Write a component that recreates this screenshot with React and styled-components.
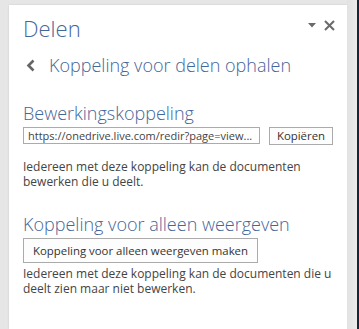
import React from 'react';
import styled, { createGlobalStyle } from 'styled-components';

const GlobalStyle = createGlobalStyle`
  html, body {
    margin: 0;
    padding: 0;
    background: #e6e6e6;
    font-family: "Open Sans", "Liberation Sans", sans-serif;
  }
`;

const Frame = styled.div`
  display: flex;
  width: 359px;
  height: 329px;
  overflow: hidden;
`;

const Pane = styled.div`
  margin: 5px 0 0 9px;
  width: 338px;
  background: #fff;
  box-shadow: 0 0 2px rgba(0, 0, 0, 0.12);
  padding: 8px 12px 0 14px;
  box-sizing: border-box;
`;

const Gutter = styled.div`
  flex: 1;
  background: linear-gradient(90deg, #e2e2e2, #ebebeb);
`;

const Edge = styled.div`
  width: 2px;
  background: #14263a;
`;

const Header = styled.div`
  display: flex;
  align-items: flex-start;
  justify-content: space-between;
`;

const Title = styled.h1`
  margin: 0;
  font-size: 22px;
  font-weight: 300;
  line-height: 30px;
  color: #44669a;
`;

const PaneTools = styled.div`
  display: flex;
  align-items: center;
  gap: 8px;
  padding-top: 7px;
  color: #6a6a6a;
`;

const BackRow = styled.div`
  display: flex;
  align-items: center;
  gap: 14px;
  margin-top: 10px;
  padding-left: 3px;
`;

const Heading = styled.h2`
  margin: 0;
  font-size: 18px;
  font-weight: 300;
  line-height: 24px;
  color: #44669a;
`;

const Section = styled.section`
  margin-top: ${(p) => p.$gap}px;
  display: flex;
  flex-direction: column;
  align-items: flex-start;
  gap: 2px;
`;

const LinkRow = styled.div`
  display: flex;
  align-items: flex-start;
  gap: 9px;
`;

const LinkField = styled.div`
  width: 237px;
  height: 17px;
  box-sizing: border-box;
  border: 1px solid #ababab;
  padding: 0 4px;
  font-size: 11px;
  line-height: 15px;
  color: #444;
  white-space: nowrap;
  overflow: hidden;
`;

const Button = styled.button`
  height: ${(p) => p.$h}px;
  ${(p) => p.$w && `width: ${p.$w}px;`}
  box-sizing: border-box;
  border: 1px solid #ababab;
  background: #fdfdfd;
  padding: 0 ${(p) => p.$px}px;
  font-family: inherit;
  font-size: 11.4px;
  color: #333;
  line-height: 1;
  white-space: nowrap;
`;

const Note = styled.p`
  margin: ${(p) => p.$top}px 0 0;
  font-size: 12px;
  line-height: 15px;
  color: #444;
`;

const Caret = () => (
  <svg width="8" height="5" viewBox="0 0 8 5">
    <path d="M0 0h8L4 4.5z" fill="currentColor" />
  </svg>
);

const Close = () => (
  <svg width="11" height="11" viewBox="0 0 11 11">
    <path d="M1 1l9 9M10 1l-9 9" stroke="currentColor" strokeWidth="2" />
  </svg>
);

const Back = () => (
  <svg width="9" height="13" viewBox="0 0 9 13">
    <path d="M7.5 1.5L2.5 6.5l5 5" stroke="#666" strokeWidth="2.6" fill="none" />
  </svg>
);

export default function App() {
  return (
    <>
      <GlobalStyle />
      <Frame>
        <Pane>
          <Header>
            <Title>Delen</Title>
            <PaneTools>
              <Caret />
              <Close />
            </PaneTools>
          </Header>
          <BackRow>
            <Back />
            <Heading>Koppeling voor delen ophalen</Heading>
          </BackRow>
          <Section $gap={24}>
            <Heading>Bewerkingskoppeling</Heading>
            <LinkRow>
              <LinkField>https://onedrive.live.com/redir?page=view...</LinkField>
              <Button $h={18} $w={64} $px={0}>Kopiëren</Button>
            </LinkRow>
            <Note $top={12}>Iedereen met deze koppeling kan de documenten bewerken die u deelt.</Note>
          </Section>
          <Section $gap={23}>
            <Heading>Koppeling voor alleen weergeven</Heading>
            <Button $h={25} $px={9}>Koppeling voor alleen weergeven maken</Button>
            <Note $top={1}>Iedereen met deze koppeling kan de documenten die u deelt zien maar niet bewerken.</Note>
          </Section>
        </Pane>
        <Gutter />
        <Edge />
      </Frame>
    </>
  );
}
